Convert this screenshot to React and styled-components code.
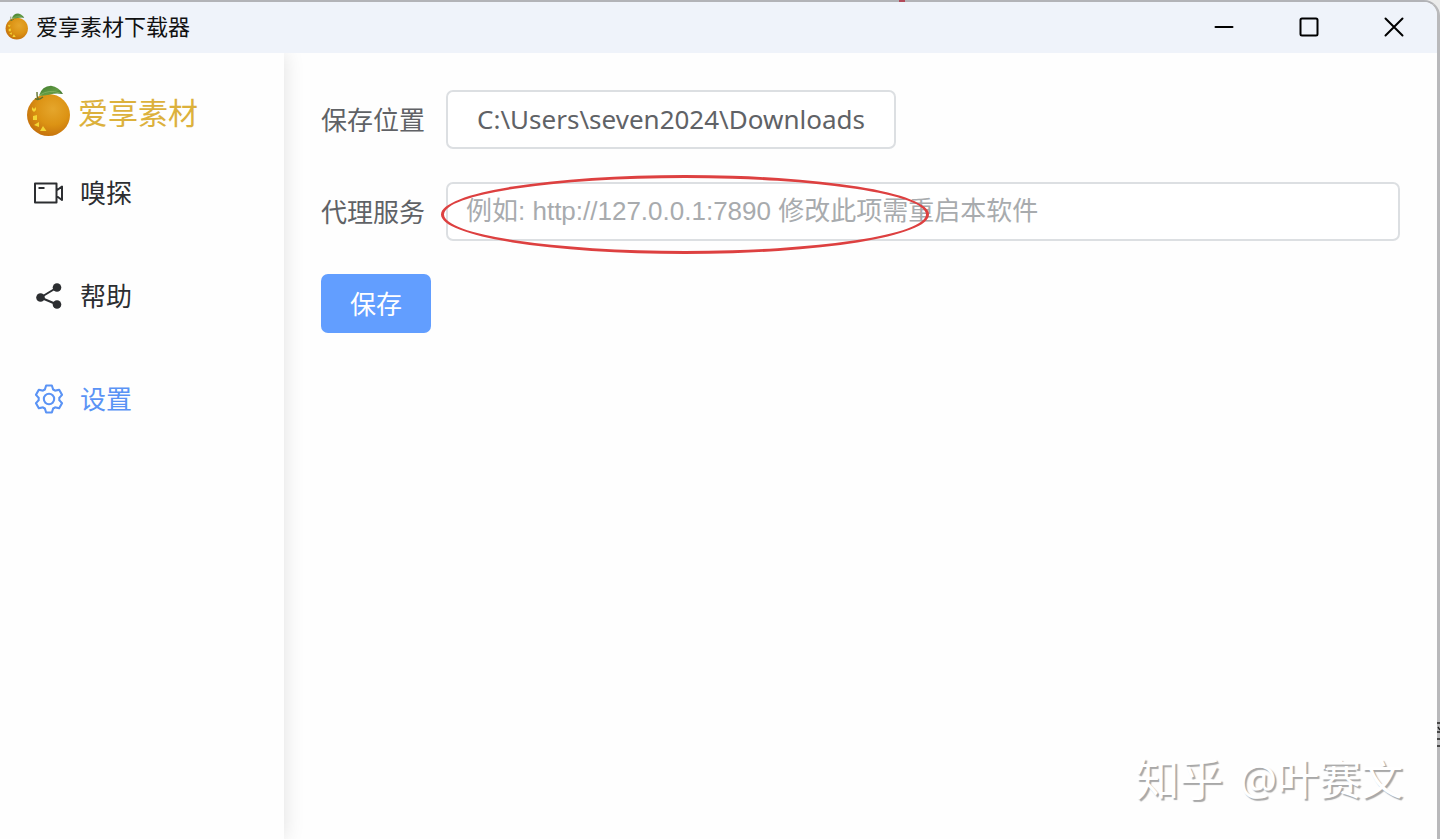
import React from "react";
import styled, { createGlobalStyle } from "styled-components";

const GlobalStyle = createGlobalStyle`
  *, *::before, *::after { box-sizing: border-box; }
  body {
    margin: 0;
    background: #ebebeb;
    font-family: "Noto Sans", "Noto Sans CJK SC", sans-serif;
    color: #606266;
  }
  button, input { font: inherit; color: inherit; margin: 0; }
`;

const Window = styled.div`
  position: relative;
  display: flex;
  flex-direction: column;
  min-height: 100vh;
  background: #fefefe;
  border-top: 2px solid #b2b3b7;
  border-right: 3px solid #b9b9bb;
  border-top-right-radius: 16px;
`;

const TitleBar = styled.header`
  display: flex;
  align-items: center;
  height: 51px;
  padding: 0 1px 2px 5px;
  border-top-right-radius: 13px;
  background: #eff3fa;
`;

const Title = styled.h1`
  flex: 1;
  margin: 0 0 0 8px;
  padding-bottom: 2px;
  font-size: 22px;
  font-weight: 400;
  line-height: 32px;
  color: #111;
`;

const WindowButton = styled.button`
  display: flex;
  align-items: center;
  justify-content: center;
  width: 85px;
  height: 100%;
  padding: 0;
  border: 0;
  background: none;
  color: #000;
`;

const Body = styled.div`
  display: flex;
  flex: 1;
`;

const Sidebar = styled.aside`
  flex: none;
  width: 284px;
  padding-top: 28px;
  background: #fefefe;
  box-shadow: 0 0 20px rgba(0, 0, 0, 0.12);
  clip-path: inset(0 -24px 0 0);
`;

const Brand = styled.div`
  display: flex;
  align-items: center;
  gap: 8px;
  height: 60px;
  padding-left: 26px;
  font-size: 30px;
  line-height: 40px;
  color: #dcb13c;
`;

const BrandName = styled.span`
  padding-top: 4px;
`;

const NavLink = styled.a`
  display: flex;
  align-items: center;
  gap: 15px;
  height: 103px;
  padding-left: 33px;
  font-size: 26px;
  line-height: 36px;
  text-decoration: none;
  color: ${(p) => (p.$active ? "#5a93f5" : "#2c2e31")};
`;

const Form = styled.form`
  display: flex;
  flex: 1;
  flex-direction: column;
  align-items: flex-start;
  gap: 33px;
  padding: 37px;
`;

const Row = styled.div`
  display: flex;
  align-items: center;
  width: 100%;
`;

const Label = styled.label`
  flex: none;
  width: 125px;
  font-size: 26px;
  line-height: 36px;
`;

const Control = styled.div`
  position: relative;
  display: flex;
  flex: 1;
`;

const PathButton = styled.button`
  min-width: 450px;
  height: 59px;
  padding: 0 28px 2px;
  border: 2px solid #dcdfe2;
  border-radius: 7px;
  background: #fff;
  font-size: 26px;
  line-height: 36px;
`;

const TextInput = styled.input`
  width: 100%;
  height: 59px;
  padding: 0 18px;
  border: 2px solid #dcdfe2;
  border-radius: 7px;
  background: #fff;
  font-family: "Liberation Sans", "Noto Sans CJK SC", sans-serif;
  font-size: 26px;
  line-height: 36px;
  outline: none;

  &::placeholder { color: #a8abae; opacity: 1; }
`;

const SaveButton = styled.button`
  height: 59px;
  padding: 0 29px;
  border: 0;
  border-radius: 7px;
  background: #629eff;
  font-size: 26px;
  line-height: 36px;
  color: #fff;
`;

const Highlight = styled.div`
  position: absolute;
  left: -5px;
  top: -7px;
  width: 488px;
  height: 79px;
  border: 3px solid #dd4040;
  border-radius: 50%;
  pointer-events: none;
`;

const Watermark = styled.div`
  position: absolute;
  right: 34px;
  bottom: 30px;
  display: flex;
  gap: 16px;
  font-size: 42px;
  line-height: 60px;
  color: #fff;
  text-shadow: 2px 2px 1px #a8a8a8;
`;

const WatermarkSite = styled.span`
  font-size: 44px;
`;

const TopMark = styled.i`
  position: absolute;
  top: -2px;
  left: 899px;
  width: 6px;
  height: 2px;
  background: #b34a5a;
`;

const Orange = ({ width, height, id }) => (
  <svg width={width} height={height} viewBox="0 0 44 52" aria-hidden="true">
    <defs>
      <radialGradient id={id} cx="0.6" cy="0.36" r="0.68">
        <stop offset="0" stopColor="#e5a62c" />
        <stop offset="0.55" stopColor="#dc9314" />
        <stop offset="1" stopColor="#c4700c" />
      </radialGradient>
      <linearGradient id={`${id}-leaf`} x1="0" y1="0" x2="1" y2="1">
        <stop offset="0" stopColor="#3f7a2c" />
        <stop offset="0.6" stopColor="#639c45" />
        <stop offset="1" stopColor="#2f6423" />
      </linearGradient>
    </defs>
    <ellipse cx="22.500" cy="30" rx="21.500" ry="21" fill={`url(#${id})`} />
    <path d="M13 10.500Q16 1 25 .8Q33 2 37 9Q29 8 24 9.500Q18 11 13 10.500Z" fill={`url(#${id}-leaf)`} />
    <path d="M14 10Q23 4 34 8" stroke="#85b465" strokeWidth="0.8" fill="none" />
    <path d="M11 7Q10.500 11 12.500 15M9 13.500Q12 16 17 12" stroke="#5f712c" strokeWidth="1.400" fill="none" />
    <path d="M6 22l2 2 2-2v3l-2 2-2-2zM7 31l4-1v5H7zM8 40l5-3v5zM14 46l3-5 3.500 5z" fill="#f3d534" />
  </svg>
);

const CameraIcon = () => (
  <svg width="32" height="32" viewBox="0 0 32 32" fill="none" stroke="currentColor" strokeWidth="2" strokeLinejoin="round" aria-hidden="true">
    <path d="M2 6.500h21.500v19H2zM5.500 11h6M23.500 13.500l5.500-4v13.500l-5.500-4" />
  </svg>
);

const ShareIcon = () => (
  <svg width="32" height="32" viewBox="0 0 32 32" fill="currentColor" aria-hidden="true">
    <path d="M24 7.500L7.500 17.500L24 24.500" stroke="currentColor" strokeWidth="2" fill="none" />
    <circle cx="24" cy="7.500" r="4.300" />
    <circle cx="7.500" cy="17.500" r="4.300" />
    <circle cx="24" cy="24.500" r="4.300" />
  </svg>
);

const GearIcon = () => (
  <svg width="32" height="32" viewBox="16 16 992 992" fill="currentColor" aria-hidden="true">
    <path d="M600.704 64a32 32 0 0 1 30.464 22.208l35.200 109.376c14.784 7.232 28.928 15.360 42.432 24.512l112.384-24.192a32 32 0 0 1 34.432 15.360L944.320 364.800a32 32 0 0 1-4.032 37.504l-77.120 85.120a357.120 357.120 0 0 1 0 49.024l77.120 85.248a32 32 0 0 1 4.032 37.504l-88.704 153.600a32 32 0 0 1-34.432 15.296L708.800 803.904c-13.440 9.088-27.648 17.280-42.368 24.512l-35.264 109.376A32 32 0 0 1 600.704 960H423.296a32 32 0 0 1-30.464-22.208L357.696 828.480a351.616 351.616 0 0 1-42.560-24.640l-112.320 24.256a32 32 0 0 1-34.432-15.360L79.680 659.200a32 32 0 0 1 4.032-37.504l77.120-85.248a357.120 357.120 0 0 1 0-48.896l-77.120-85.248A32 32 0 0 1 79.680 364.800l88.704-153.600a32 32 0 0 1 34.432-15.296l112.320 24.256c13.568-9.152 27.776-17.408 42.560-24.640l35.200-109.312A32 32 0 0 1 423.232 64H600.640zm-23.424 64H446.720l-36.352 113.088-24.512 11.968a294.113 294.113 0 0 0-34.816 20.096l-22.656 15.360-116.224-25.088-65.280 113.152 79.680 88.192-1.920 27.136a293.120 293.120 0 0 0 0 40.192l1.920 27.136-79.808 88.192 65.344 113.152 116.224-25.024 22.656 15.296a294.113 294.113 0 0 0 34.816 20.096l24.512 11.968L446.720 896h130.688l36.480-113.152 24.448-11.904a288.282 288.282 0 0 0 34.752-20.096l22.592-15.296 116.288 25.024 65.280-113.152-79.744-88.192 1.920-27.136a293.120 293.120 0 0 0 0-40.256l-1.920-27.136 79.808-88.128-65.344-113.152-116.288 24.960-22.592-15.232a287.616 287.616 0 0 0-34.752-20.096l-24.448-11.904L577.344 128zM512 320a192 192 0 1 1 0 384 192 192 0 0 1 0-384zm0 64a128 128 0 1 0 0 256 128 128 0 0 0 0-256z" />
  </svg>
);

const ControlIcon = ({ d }) => (
  <svg width="20" height="20" viewBox="0 0 20 20" fill="none" stroke="currentColor" strokeWidth="2" strokeLinecap="round" strokeLinejoin="round" aria-hidden="true">
    <path d={d} />
  </svg>
);

const EdgeSvg = styled.svg`
  position: absolute;
  right: -3px;
  bottom: 90px;
`;

const controls = [
  ["最小化", "M1.500 10h17"],
  ["最大化", "M3 1.500h14q1.500 0 1.500 1.500v14q0 1.500-1.500 1.500h-14q-1.500 0-1.500-1.500v-14q0-1.500 1.500-1.500z"],
  ["关闭", "M1.500 1.500l17 17M18.500 1.500l-17 17"],
];

const navItems = [
  ["嗅探", CameraIcon, false],
  ["帮助", ShareIcon, false],
  ["设置", GearIcon, true],
];

export default function App() {
  return (
    <>
      <GlobalStyle />
      <Window>
        <TopMark />
        <TitleBar>
          <Orange width={23} height={27} id="orange-small" />
          <Title>爱享素材下载器</Title>
          {controls.map(([name, d]) => (
            <WindowButton key={name} type="button" aria-label={name}>
              <ControlIcon d={d} />
            </WindowButton>
          ))}
        </TitleBar>
        <Body>
          <Sidebar>
            <Brand>
              <Orange width={44} height={52} id="orange-large" />
              <BrandName>爱享素材</BrandName>
            </Brand>
            <nav>
              {navItems.map(([name, Icon, active]) => (
                <NavLink key={name} href="#" $active={active} aria-current={active ? "page" : undefined}>
                  <Icon />
                  {name}
                </NavLink>
              ))}
            </nav>
          </Sidebar>
          <Form onSubmit={(e) => e.preventDefault()}>
            <Row>
              <Label htmlFor="path">保存位置</Label>
              <PathButton id="path" type="button">C:\Users\seven2024\Downloads</PathButton>
            </Row>
            <Row>
              <Label htmlFor="proxy">代理服务</Label>
              <Control>
                <TextInput id="proxy" type="text" placeholder="例如: http://127.0.0.1:7890 修改此项需重启本软件" />
                <Highlight />
              </Control>
            </Row>
            <SaveButton type="submit">保存</SaveButton>
          </Form>
        </Body>
        <Watermark>
          <WatermarkSite>知乎</WatermarkSite>
          <span>@叶赛文</span>
        </Watermark>
        <EdgeSvg width="3" height="28" viewBox="0 0 3 28" stroke="#222" strokeWidth="1.500" aria-hidden="true">
          <path d="M0 2h3M1 6l2 3M0 11h3M0 18h3M0 25h3" />
        </EdgeSvg>
      </Window>
    </>
  );
}
